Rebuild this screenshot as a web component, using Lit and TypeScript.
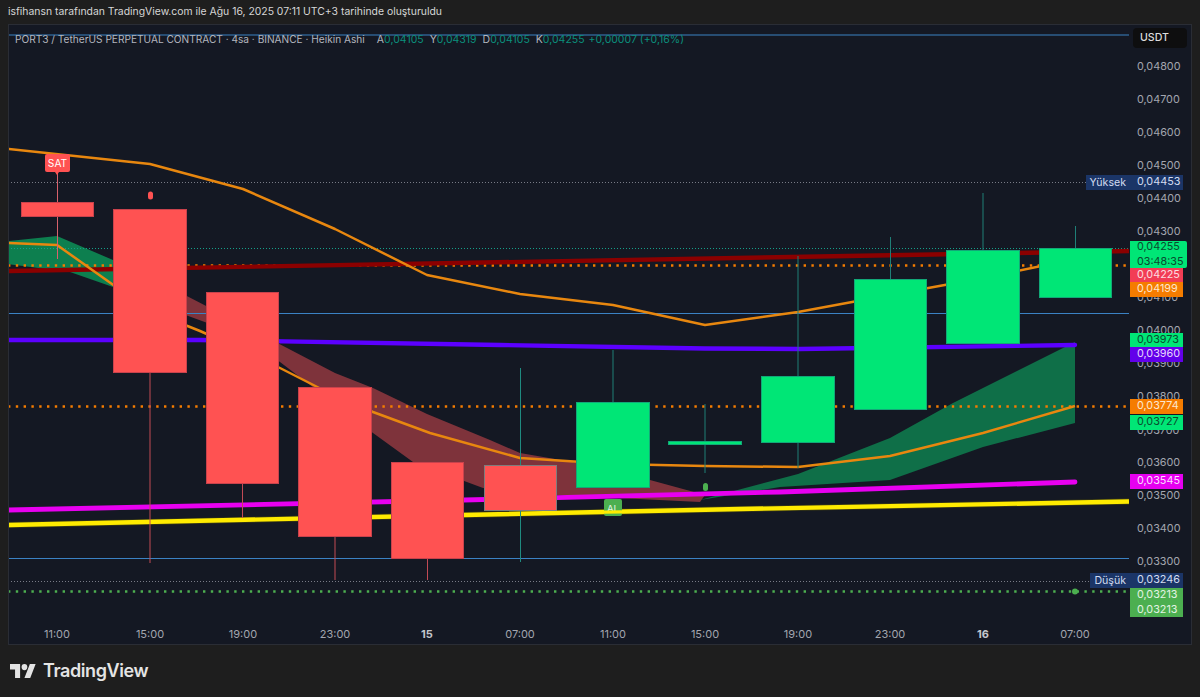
import { LitElement, html, css, svg } from "lit";
import { customElement } from "lit/decorators.js";

const RED = "#ff5252";
const GREEN = "#00e676";
const candles: { x0: number; x1: number; t: number; b: number; wt: number; wb: number; up: boolean; wc?: string; bc?: string }[] = [
  { x0: 21, x1: 94, t: 202, b: 217, wt: 173, wb: 259, up: false, wc: "#d8616c" },
  { x0: 113, x1: 187, t: 209, b: 373, wt: 209, wb: 563, up: false, wc: "#c24a55" },
  { x0: 206, x1: 279, t: 292, b: 484, wt: 292, wb: 518, up: false, wc: "#c24a55" },
  { x0: 298, x1: 372, t: 387, b: 537, wt: 387, wb: 580, up: false, wc: "#c24a55" },
  { x0: 391, x1: 464, t: 462, b: 559, wt: 462, wb: 580, up: false, wc: "#c24a55" },
  { x0: 484, x1: 557, t: 465, b: 511, wt: 368, wb: 562, up: false, wc: "#1f8a80", bc: "#7d7d7d" },
  { x0: 576, x1: 650, t: 402, b: 488, wt: 350, wb: 488, up: true, wc: "#1f7f77" },
  { x0: 668, x1: 742, t: 441, b: 445, wt: 404, wb: 473, up: true, wc: "#1f7f77" },
  { x0: 761, x1: 835, t: 376, b: 443, wt: 256, wb: 468, up: true, wc: "#1f7f77" },
  { x0: 854, x1: 927, t: 279, b: 410, wt: 237, wb: 410, up: true, wc: "#1f7f77" },
  { x0: 946, x1: 1020, t: 250, b: 344, wt: 193, wb: 344, up: true, wc: "#1f7f77" },
  { x0: 1039, x1: 1112, t: 248, b: 298, wt: 226, wb: 298, up: true, wc: "#1f7f77" },
];

const grid: [string, number][] = [
  ["0,04800", 67], ["0,04700", 100], ["0,04600", 133], ["0,04500", 166], ["0,04400", 199], ["0,04300", 232],
  ["0,04100", 298], ["0,04000", 331], ["0,03900", 364], ["0,03800", 397], ["0,03700", 431],
  ["0,03600", 463], ["0,03500", 496], ["0,03400", 529], ["0,03300", 562],
];

const tags: { y: number; h: number; cls: string; lines: string[]; wide?: boolean }[] = [
  { y: 175, h: 15, cls: "navy", lines: ["0,04453"] },
  { y: 241, h: 27, cls: "lime", lines: ["0,04255", "03:48:35"], wide: true },
  { y: 268, h: 14, cls: "crimson", lines: ["0,04225"] },
  { y: 282, h: 15, cls: "orange", lines: ["0,04199"] },
  { y: 333, h: 14, cls: "lime", lines: ["0,03973"] },
  { y: 347, h: 15, cls: "purple", lines: ["0,03960"] },
  { y: 399, h: 14.5, cls: "orange", lines: ["0,03774"] },
  { y: 415, h: 14.5, cls: "lime", lines: ["0,03727"] },
  { y: 474, h: 15, cls: "magenta", lines: ["0,03545"] },
  { y: 573, h: 15, cls: "navy", lines: ["0,03246"] },
  { y: 588, h: 29, cls: "green", lines: ["0,03213", "0,03213"] },
];

const times: [number, string, boolean][] = [
  [57, "11:00", false], [150, "15:00", false], [243, "19:00", false], [335, "23:00", false],
  [427, "15", true], [520, "07:00", false], [613, "11:00", false], [705, "15:00", false],
  [798, "19:00", false], [890, "23:00", false], [983, "16", true], [1075, "07:00", false],
];

const ohlc: [string, string][] = [["A", "0,04105"], ["Y", "0,04319"], ["D", "0,04105"], ["K", "0,04255"]];

@customElement("app-root")
export class AppRoot extends LitElement {
  static styles = css`
    :host {
      display: block;
      width: 1200px;
      height: 697px;
      background: #1e1e1e;
      overflow: hidden;
      font-family: Inter, "Liberation Sans", sans-serif;
    }
    .head {
      height: 24px;
      padding: 3px 0 0 8px;
      box-sizing: border-box;
      font-size: 10.4px;
      line-height: 17px;
      color: #d6d6d6;
      white-space: nowrap;
    }
    .chart {
      position: relative;
      margin: 0 8px;
      height: 621px;
      box-sizing: border-box;
      border: 1px solid #2a2d35;
      background: #141823;
      display: grid;
      grid-template-columns: 1120px 1fr;
      grid-template-rows: 595px 1fr;
    }
    .pane { position: relative; }
    .pane svg { display: block; }
    .legend {
      position: absolute;
      left: 6px;
      top: 7px;
      display: flex;
      align-items: baseline;
      gap: 6px;
      font-size: 10.5px;
      line-height: 14px;
      color: #b2b5be;
      white-space: pre;
    }
    .legend .title { font-size: 10.15px; margin-right: 6px; }
    .legend b { font-weight: 400; color: #0b8f7c; }
    .legend b.chg { font-size: 10.5px; margin-left: -2px; }
    .scale { position: relative; }
    .usdt {
      position: absolute;
      left: 4px;
      top: 3px;
      width: 54px;
      height: 20px;
      box-sizing: border-box;
      padding-left: 7px;
      background: #0e0e0f;
      border-radius: 4px;
      font-size: 10.6px;
      font-weight: 500;
      line-height: 20px;
      color: #dcdcdc;
    }
    .price {
      position: absolute;
      left: 8px;
      font-size: 10.8px;
      line-height: 14px;
      color: #a3a6af;
      white-space: nowrap;
    }
    .tag {
      position: absolute;
      left: 1px;
      width: 53px;
      box-sizing: border-box;
      padding-left: 7px;
      font-size: 10.8px;
      white-space: nowrap;
      display: flex;
      flex-direction: column;
      justify-content: center;
    }
    .tag span { display: block; line-height: 14.5px; }
    .tag.wide { width: 57px; border-radius: 0 2px 2px 0; }
    .navy { background: #1b3567; color: #d3dcf0; }
    .lime { background: #00e676; color: #0a4a2e; }
    .crimson { background: #f23d55; color: #fbdde0; }
    .orange { background: #f57c00; color: #fde7cf; }
    .purple { background: #6200ea; color: #e6d8fc; }
    .magenta { background: #e600f0; color: #fbdffc; }
    .green { background: #4caf50; color: #e2f3e3; }
    .side {
      position: absolute;
      right: 61px;
      height: 15px;
      box-sizing: border-box;
      padding: 0 4px;
      background: #1b3567;
      color: #d3dcf0;
      font-size: 10.6px;
      line-height: 15px;
      white-space: nowrap;
    }
    .time {
      grid-column: 1 / 2;
      position: relative;
    }
    .time span {
      position: absolute;
      top: 7px;
      transform: translateX(-50%);
      font-size: 11px;
      line-height: 14px;
      color: #a3a6af;
    }
    .time span.bold { font-weight: 700; color: #c4c6cc; }
    .foot {
      display: flex;
      align-items: center;
      gap: 7px;
      padding: 16px 0 0 10px;
    }
    .foot svg { display: block; }
    .brand {
      font-size: 18px;
      font-weight: 600;
      letter-spacing: -0.4px;
      line-height: 20px;
      color: #e4e4e4;
    }
    .sat {
      position: absolute;
      display: flex;
      align-items: center;
      justify-content: center;
      border-radius: 2px;
      font-size: 10.2px;
      color: #fff;
      left: 36px;
      top: 129px;
      width: 25px;
      height: 18px;
      background: #ff5252;
    }
    .sat::after {
      content: "";
      position: absolute;
      left: 10px;
      bottom: -3px;
      border: 2.5px solid transparent;
      border-bottom-width: 0;
      border-top: 3px solid #ff5252;
    }
  `;

  private pane() {
    const orange1 = "8,149 150,164 243,189 335,229 427,275 520,294 613,305 705,325 798,312 890,295 983,278 1075,259";
    const orange2 = "8,243 57,245 150,311 200,331 243,350 280,368 335,396 373,412 430,433 520,458 613,464 705,466 798,467 890,456 983,433 1075,406";
    return svg`
      <polygon fill="#0d7f4f" points="8,241 57,236 113,260 150,277 150,302 113,287 70,272 8,264" />
      <polygon fill="#7e333b" points="150,277 243,325 335,373 373,388 427,414 490,440 520,453 613,469 650,480 705,495 700,502 557,495 483,488 440,472 413,462 373,433 280,362 243,336 150,302" />
      <polygon fill="#0f6f48" points="700,500 798,474 890,438 953,403 983,388 1075,342 1075,423 983,447 890,480 780,487" />
      <line x1="8" x2="1129" y1="35" y2="35" stroke="#3b82c4" stroke-width="1.2" />
      <line x1="8" x2="1129" y1="313.5" y2="313.5" stroke="#3b82c4" />
      <line x1="8" x2="1129" y1="558.5" y2="558.5" stroke="#3b82c4" />
      <line x1="8" x2="1129" y1="182.5" y2="182.5" stroke="#787b86" stroke-dasharray="1 2" />
      <line x1="8" x2="1129" y1="581.5" y2="581.5" stroke="#787b86" stroke-dasharray="1 2" />
      <line x1="8" x2="1129" y1="248.5" y2="248.5" stroke="#15a08a" stroke-dasharray="1 2" />
      <line x1="8" x2="1129" y1="265.5" y2="265.5" stroke="#f57c00" stroke-width="2.4" stroke-dasharray="2.4 5.4" />
      <line x1="8" x2="1129" y1="406.5" y2="406.5" stroke="#f57c00" stroke-width="2.4" stroke-dasharray="2.4 5.4" />
      <line x1="8" x2="1129" y1="591.5" y2="591.5" stroke="#4caf50" stroke-width="2.4" stroke-dasharray="2.4 5.4" />
      <polyline fill="none" stroke="#8b0000" stroke-width="4.4" points="8,271 1129,251" />
      <polyline fill="none" stroke="#5c00ff" stroke-width="4.4" stroke-linecap="round" points="8,340 200,340 500,345 705,348.5 800,349 1075,345" />
      <polyline fill="none" stroke="#e800f0" stroke-width="4.8" stroke-linecap="round" points="8,510 464,500 780,492 1075,482" />
      <polyline fill="none" stroke="#3a3a14" stroke-width="5.8" points="8,525 464,515 740,509 1129,501.5" />
      <polyline fill="none" stroke="#ffeb00" stroke-width="4.4" points="8,525 464,515 740,509 1129,501.5" />
      <polyline fill="none" stroke="#e8870f" stroke-width="2.5" stroke-linejoin="round" points=${orange1} />
      <polyline fill="none" stroke="#e8870f" stroke-width="2.5" stroke-linejoin="round" points=${orange2} />
      <circle cx="1075" cy="591.5" r="3" fill="#4caf50" />
      <rect x="148" y="191.5" width="5" height="8" rx="2.5" fill="#ff5252" />
      <rect x="703" y="483" width="5" height="8" rx="2.5" fill="#4caf50" />
      <rect x="604" y="499" width="18" height="17" rx="2" fill="#4caf50" />
      <text x="613" y="512" text-anchor="middle" font-size="9.6" fill="#e6f4e6">AL</text>
      <polyline fill="none" stroke="#ffeb00" stroke-width="3.2" points="604,512.2 622,511.8" />
      ${candles.map(
        (c) => svg`
          <line x1=${(c.x0 + c.x1) / 2} x2=${(c.x0 + c.x1) / 2} y1=${c.wt} y2=${c.wb} stroke=${c.wc ?? "#888"} stroke-width="1" />
          <rect x=${c.x0 + 0.5} y=${c.t + 0.5} width=${c.x1 - c.x0 - 1} height=${c.b - c.t - 1}
            fill=${c.up ? GREEN : RED} stroke=${c.bc ?? (c.up ? "#12a878" : "#c9424c")} stroke-width="1" />
        `
      )}
    `;
  }

  render() {
    return html`
      <div class="head">isfihansn tarafından TradingView.com ile Ağu 16, 2025 07:11 UTC+3 tarihinde oluşturuldu</div>
      <div class="chart">
        <div class="pane">
          <svg width="1120" height="595" viewBox="9 25 1120 595">${this.pane()}</svg>
          <div class="legend">
            <span class="title">PORT3 / TetherUS PERPETUAL CONTRACT · 4sa · BINANCE · Heikin Ashi</span>
            ${ohlc.map(([k, v]) => html`<span>${k}<b>${v}</b></span>`)}
            <b class="chg">+0,00007 (+0,16%)</b>
          </div>
          <div class="sat">SAT</div>
        </div>
        <div class="scale">
          ${grid.map(([g, y]) => html`<div class="price" style="top:${y - 25 - 7}px">${g}</div>`)}
          <div class="usdt">USDT</div>
          <div class="side" style="top:150px">Yüksek</div>
          <div class="side" style="top:548px">Düşük</div>
          ${tags.map(
            (t) => html`<div class="tag ${t.cls} ${t.wide ? "wide" : ""}" style="top:${t.y - 25}px;height:${t.h}px">
              ${t.lines.map((l) => html`<span>${l}</span>`)}
            </div>`
          )}
        </div>
        <div class="time">
          ${times.map(
            ([x, s, b]) => html`<span class=${b ? "bold" : ""} style="left:${x - 9}px">${s}</span>`
          )}
        </div>
      </div>
      <div class="foot">
        <svg width="26" height="14" viewBox="0 4 36 18" preserveAspectRatio="none" fill="#e4e4e4">
          <path d="M14 22H7V11H0V4h14v18zM28 22h-8l7.5-18h8L28 22z"></path>
          <circle cx="20" cy="8" r="4"></circle>
        </svg>
        <div class="brand">TradingView</div>
      </div>
    `;
  }
}
